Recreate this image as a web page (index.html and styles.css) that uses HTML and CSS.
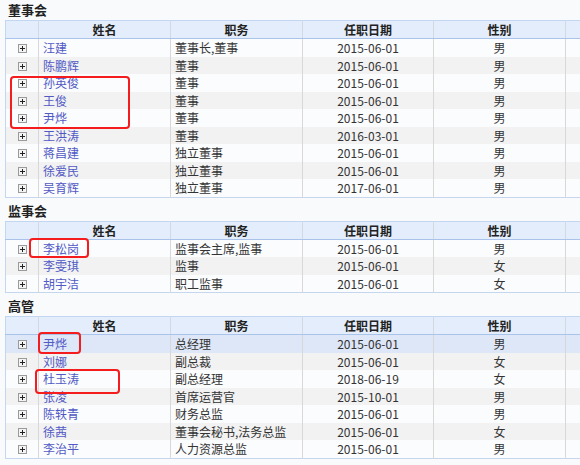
FILE: index.html
```html
<!DOCTYPE html>
<html lang="zh">
<head>
<meta charset="utf-8">
<link rel="stylesheet" href="styles.css">
</head>
<body>
<div class="page">
  <section class="sec">
    <div class="title">董事会</div>
    <table class="grid">
      <colgroup><col class="c-exp"><col class="c-name"><col class="c-job"><col class="c-date"><col class="c-sex"><col class="c-rest"></colgroup>
      <thead><tr><th></th><th>姓名</th><th>职务</th><th>任职日期</th><th>性别</th><th></th></tr></thead>
      <tbody>
        <tr><td class="exp"><span class="plus"></span></td><td><a>汪建</a></td><td>董事长,董事</td><td class="ctr">2015-06-01</td><td class="ctr">男</td><td></td></tr>
        <tr><td class="exp"><span class="plus"></span></td><td><a>陈鹏辉</a></td><td>董事</td><td class="ctr">2015-06-01</td><td class="ctr">男</td><td></td></tr>
        <tr><td class="exp"><span class="plus"></span></td><td><a>孙英俊</a></td><td>董事</td><td class="ctr">2015-06-01</td><td class="ctr">男</td><td></td></tr>
        <tr><td class="exp"><span class="plus"></span></td><td><a>王俊</a></td><td>董事</td><td class="ctr">2015-06-01</td><td class="ctr">男</td><td></td></tr>
        <tr><td class="exp"><span class="plus"></span></td><td><a>尹烨</a></td><td>董事</td><td class="ctr">2015-06-01</td><td class="ctr">男</td><td></td></tr>
        <tr><td class="exp"><span class="plus"></span></td><td><a>王洪涛</a></td><td>董事</td><td class="ctr">2016-03-01</td><td class="ctr">男</td><td></td></tr>
        <tr><td class="exp"><span class="plus"></span></td><td><a>蒋昌建</a></td><td>独立董事</td><td class="ctr">2015-06-01</td><td class="ctr">男</td><td></td></tr>
        <tr><td class="exp"><span class="plus"></span></td><td><a>徐爱民</a></td><td>独立董事</td><td class="ctr">2015-06-01</td><td class="ctr">男</td><td></td></tr>
        <tr><td class="exp"><span class="plus"></span></td><td><a>吴育辉</a></td><td>独立董事</td><td class="ctr">2017-06-01</td><td class="ctr">男</td><td></td></tr>
      </tbody>
    </table>
  </section>
  <section class="sec">
    <div class="title">监事会</div>
    <table class="grid">
      <colgroup><col class="c-exp"><col class="c-name"><col class="c-job"><col class="c-date"><col class="c-sex"><col class="c-rest"></colgroup>
      <thead><tr><th></th><th>姓名</th><th>职务</th><th>任职日期</th><th>性别</th><th></th></tr></thead>
      <tbody>
        <tr><td class="exp"><span class="plus"></span></td><td><a>李松岗</a></td><td>监事会主席,监事</td><td class="ctr">2015-06-01</td><td class="ctr">男</td><td></td></tr>
        <tr><td class="exp"><span class="plus"></span></td><td><a>李雯琪</a></td><td>监事</td><td class="ctr">2015-06-01</td><td class="ctr">女</td><td></td></tr>
        <tr><td class="exp"><span class="plus"></span></td><td><a>胡宇洁</a></td><td>职工监事</td><td class="ctr">2015-06-01</td><td class="ctr">女</td><td></td></tr>
      </tbody>
    </table>
  </section>
  <section class="sec">
    <div class="title">高管</div>
    <table class="grid">
      <colgroup><col class="c-exp"><col class="c-name"><col class="c-job"><col class="c-date"><col class="c-sex"><col class="c-rest"></colgroup>
      <thead><tr><th></th><th>姓名</th><th>职务</th><th>任职日期</th><th>性别</th><th></th></tr></thead>
      <tbody>
        <tr class="sel"><td class="exp"><span class="plus"></span></td><td><a>尹烨</a></td><td>总经理</td><td class="ctr">2015-06-01</td><td class="ctr">男</td><td></td></tr>
        <tr><td class="exp"><span class="plus"></span></td><td><a>刘娜</a></td><td>副总裁</td><td class="ctr">2015-06-01</td><td class="ctr">女</td><td></td></tr>
        <tr><td class="exp"><span class="plus"></span></td><td><a>杜玉涛</a></td><td>副总经理</td><td class="ctr">2018-06-19</td><td class="ctr">女</td><td></td></tr>
        <tr><td class="exp"><span class="plus"></span></td><td><a>张凌</a></td><td>首席运营官</td><td class="ctr">2015-10-01</td><td class="ctr">男</td><td></td></tr>
        <tr><td class="exp"><span class="plus"></span></td><td><a>陈轶青</a></td><td>财务总监</td><td class="ctr">2015-06-01</td><td class="ctr">男</td><td></td></tr>
        <tr><td class="exp"><span class="plus"></span></td><td><a>徐茜</a></td><td>董事会秘书,法务总监</td><td class="ctr">2015-06-01</td><td class="ctr">女</td><td></td></tr>
        <tr><td class="exp"><span class="plus"></span></td><td><a>李治平</a></td><td>人力资源总监</td><td class="ctr">2015-06-01</td><td class="ctr">男</td><td></td></tr>
      </tbody>
    </table>
  </section>
  <section class="sec">
    <div class="title">子公司人员</div>
  </section>

  <div class="mark m1"></div>
  <div class="mark m2"></div>
  <div class="mark m3"></div>
  <div class="mark m4"></div>
</div>
</body>
</html>
```
FILE: styles.css
```css
html, body {
  margin: 0;
  padding: 0;
  overflow: hidden;
  background: #f9fafc;
}
.page {
  position: relative;
  padding-left: 5px;
  font-family: "Noto Sans CJK SC", "Noto Sans", sans-serif;
  font-size: 12px;
  color: #333;
}
.sec {
  margin-bottom: 3px;
}
.title {
  height: 20px;
  line-height: 20px;
  padding-left: 3px;
  font-weight: bold;
  font-size: 13px;
  color: #222;
}
.grid {
  border-collapse: collapse;
  table-layout: fixed;
  width: 700px;
  border-left: 1px solid #c6d6ee;
  border-bottom: 1px solid #c6d6ee;
}
.c-exp { width: 33px; }
.c-name { width: 132px; }
.c-job { width: 132px; }
.c-date { width: 131px; }
.c-sex { width: 132px; }
.c-rest { width: 140px; }
.grid th {
  height: 17px;
  padding: 0;
  background: #e3edfb;
  border-top: 1px solid #c2d5f1;
  border-bottom: 1px solid #a9c3ea;
  border-right: 1px solid #d3d9e2;
  font-weight: bold;
  color: #222;
  line-height: 17px;
  text-align: center;
}
.grid td {
  height: 17.5px;
  padding: 0 0 0 4px;
  border-right: 1px solid #d8d8d8;
  line-height: 17px;
  white-space: nowrap;
  overflow: hidden;
}
.grid tbody tr:nth-child(odd) { background: #fbfcfe; }
.grid tbody tr:nth-child(even) { background: #f2f2f2; }
.grid tbody tr.sel { background: #dde7f8; }
.grid td.ctr { text-align: center; padding: 0; }
.grid td.exp { text-align: center; padding: 0; }
.grid a {
  color: #5159c4;
  text-decoration: none;
}
.plus {
  display: inline-block;
  width: 7px;
  height: 7px;
  border: 1px solid #9a9a9a;
  background:
    linear-gradient(#222, #222) center / 5px 1px no-repeat,
    linear-gradient(#222, #222) center / 1px 5px no-repeat,
    #f4f4f4;
  vertical-align: middle;
  position: relative;
  top: -1px;
}
.mark {
  position: absolute;
  border: 2px solid #f41c1c;
  border-radius: 4px;
  box-sizing: border-box;
}
.m1 { left: 10px; top: 76px; width: 120px; height: 53px; }
.m2 { left: 29px; top: 238px; width: 60px; height: 20px; }
.m3 { left: 38px; top: 332px; width: 43px; height: 22px; }
.m4 { left: 35px; top: 369px; width: 85px; height: 25px; }
```
